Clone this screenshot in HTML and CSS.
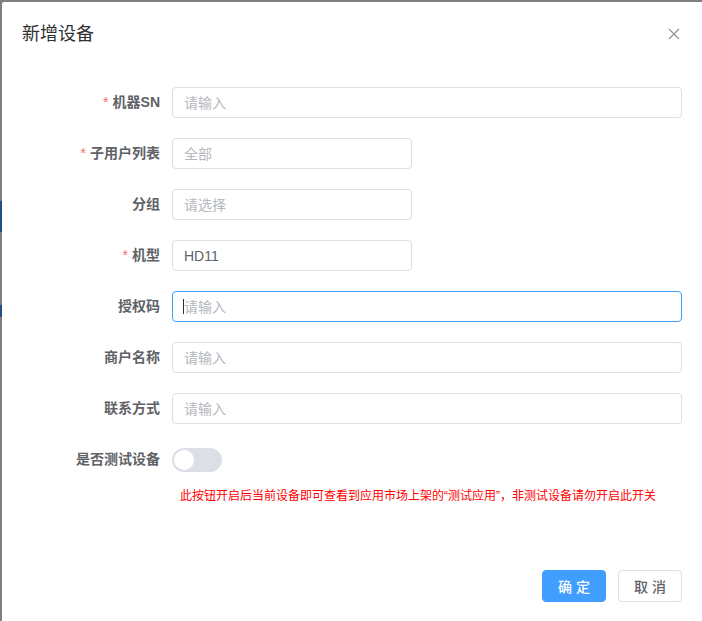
FILE: index.html
```html
<!DOCTYPE html>
<html>

<head>
    <title>新增设备</title>
    <link rel="stylesheet" href="styles.css">
</head>

<body>
    <div class="page">
        <div class="edge">
            <div class="edge-bar"></div>
            <div class="edge-bar small"></div>
        </div>
        <div class="dialog">
            <div class="dialog-header">
                <span class="dialog-title">新增设备</span>
                <svg class="close" width="12" height="12" viewBox="0 0 12 12">
                    <path d="M1 1 L11 11 M11 1 L1 11" stroke="#909399" stroke-width="1.2" fill="none" />
                </svg>
            </div>
            <div class="dialog-body">
                <div class="form-item">
                    <label class="form-label required">机器SN</label>
                    <div class="form-content">
                        <input class="input" placeholder="请输入">
                    </div>
                </div>
                <div class="form-item">
                    <label class="form-label required">子用户列表</label>
                    <div class="form-content">
                        <input class="input short" placeholder="全部">
                    </div>
                </div>
                <div class="form-item">
                    <label class="form-label">分组</label>
                    <div class="form-content">
                        <input class="input short" placeholder="请选择">
                    </div>
                </div>
                <div class="form-item">
                    <label class="form-label required">机型</label>
                    <div class="form-content">
                        <input class="input short" value="HD11">
                    </div>
                </div>
                <div class="form-item">
                    <label class="form-label">授权码</label>
                    <div class="form-content caret-wrap">
                        <input class="input focused" placeholder="请输入">
                        <span class="caret"></span>
                    </div>
                </div>
                <div class="form-item">
                    <label class="form-label">商户名称</label>
                    <div class="form-content">
                        <input class="input" placeholder="请输入">
                    </div>
                </div>
                <div class="form-item">
                    <label class="form-label">联系方式</label>
                    <div class="form-content">
                        <input class="input" placeholder="请输入">
                    </div>
                </div>
                <div class="form-item switch-item">
                    <label class="form-label">是否测试设备</label>
                    <div class="form-content">
                        <div class="switch"><span class="switch-dot"></span></div>
                    </div>
                </div>
                <div class="tip">此按钮开启后当前设备即可查看到应用市场上架的“测试应用”，非测试设备请勿开启此开关</div>
            </div>
            <div class="dialog-footer">
                <button class="btn primary">确 定</button>
                <button class="btn">取 消</button>
            </div>
        </div>
    </div>
</body>

</html>
```

FILE: styles.css
```css
body {
    margin: 0;
    padding: 0;
    background-color: #808080;
    font-family: "Liberation Sans", "Noto Sans CJK SC", sans-serif;
    overflow: hidden;
}

.page {
    display: flex;
    padding-top: 2px;
    height: 619px;
}

.edge {
    width: 2px;
    display: flex;
    flex-direction: column;
}

.edge-bar {
    margin-top: 199px;
    height: 31px;
    background-color: #204f80;
}

.edge-bar.small {
    margin-top: 73px;
    height: 12px;
}

.dialog {
    flex: 1;
    min-height: 640px;
    background-color: #fff;
    border-top-left-radius: 2px;
}

.dialog-header {
    padding: 20px 20px 10px;
    display: flex;
    justify-content: space-between;
    align-items: center;
}

.dialog-title {
    font-size: 18px;
    line-height: 24px;
    color: #303133;
}

.close {
    margin-right: 2px;
}

.dialog-body {
    padding: 31px 20px 0;
}

.form-item {
    display: flex;
    margin-bottom: 20px;
}

.form-label {
    width: 150px;
    box-sizing: border-box;
    padding-right: 12px;
    text-align: right;
    font-size: 14px;
    font-weight: bold;
    line-height: 31px;
    color: #606266;
}

.form-label.required::before {
    content: "*";
    color: #f56c6c;
    margin-right: 4px;
    font-weight: normal;
}

.form-content {
    flex: 1;
}

.caret-wrap {
    position: relative;
}

.caret {
    position: absolute;
    left: 11px;
    top: 8px;
    width: 1px;
    height: 15px;
    background-color: #303133;
}

.input {
    display: block;
    width: 100%;
    height: 31px;
    box-sizing: border-box;
    padding: 0 11px;
    border: 1px solid #dcdfe6;
    border-radius: 4px;
    font-family: "Liberation Sans", "Noto Sans CJK SC", sans-serif;
    font-size: 14px;
    color: #606266;
    outline: none;
}

.input::placeholder {
    color: #b4b7bd;
}

.input.short {
    width: 240px;
}

.input.focused {
    border-color: #409eff;
}

.switch-item {
    margin-bottom: 0;
    align-items: center;
}

.switch {
    width: 50px;
    height: 24px;
    margin-top: 1px;
    box-sizing: border-box;
    border-radius: 12px;
    background-color: #dcdfe6;
    padding: 2px;
}

.switch-dot {
    display: block;
    width: 20px;
    height: 20px;
    border-radius: 50%;
    background-color: #fff;
}

.tip {
    margin: 12px 0 0 158px;
    font-size: 12px;
    line-height: 18px;
    color: #ff0000;
}

.dialog-footer {
    display: flex;
    justify-content: flex-end;
    gap: 12px;
    padding: 65px 20px 20px;
}

.btn {
    width: 64px;
    height: 32px;
    box-sizing: border-box;
    border: 1px solid #dcdfe6;
    border-radius: 4px;
    background-color: #fff;
    color: #606266;
    font-family: "Liberation Sans", "Noto Sans CJK SC", sans-serif;
    font-size: 14px;
    font-weight: 500;
    padding: 0;
}

.btn.primary {
    background-color: #409eff;
    border-color: #409eff;
    color: #fff;
}
```
